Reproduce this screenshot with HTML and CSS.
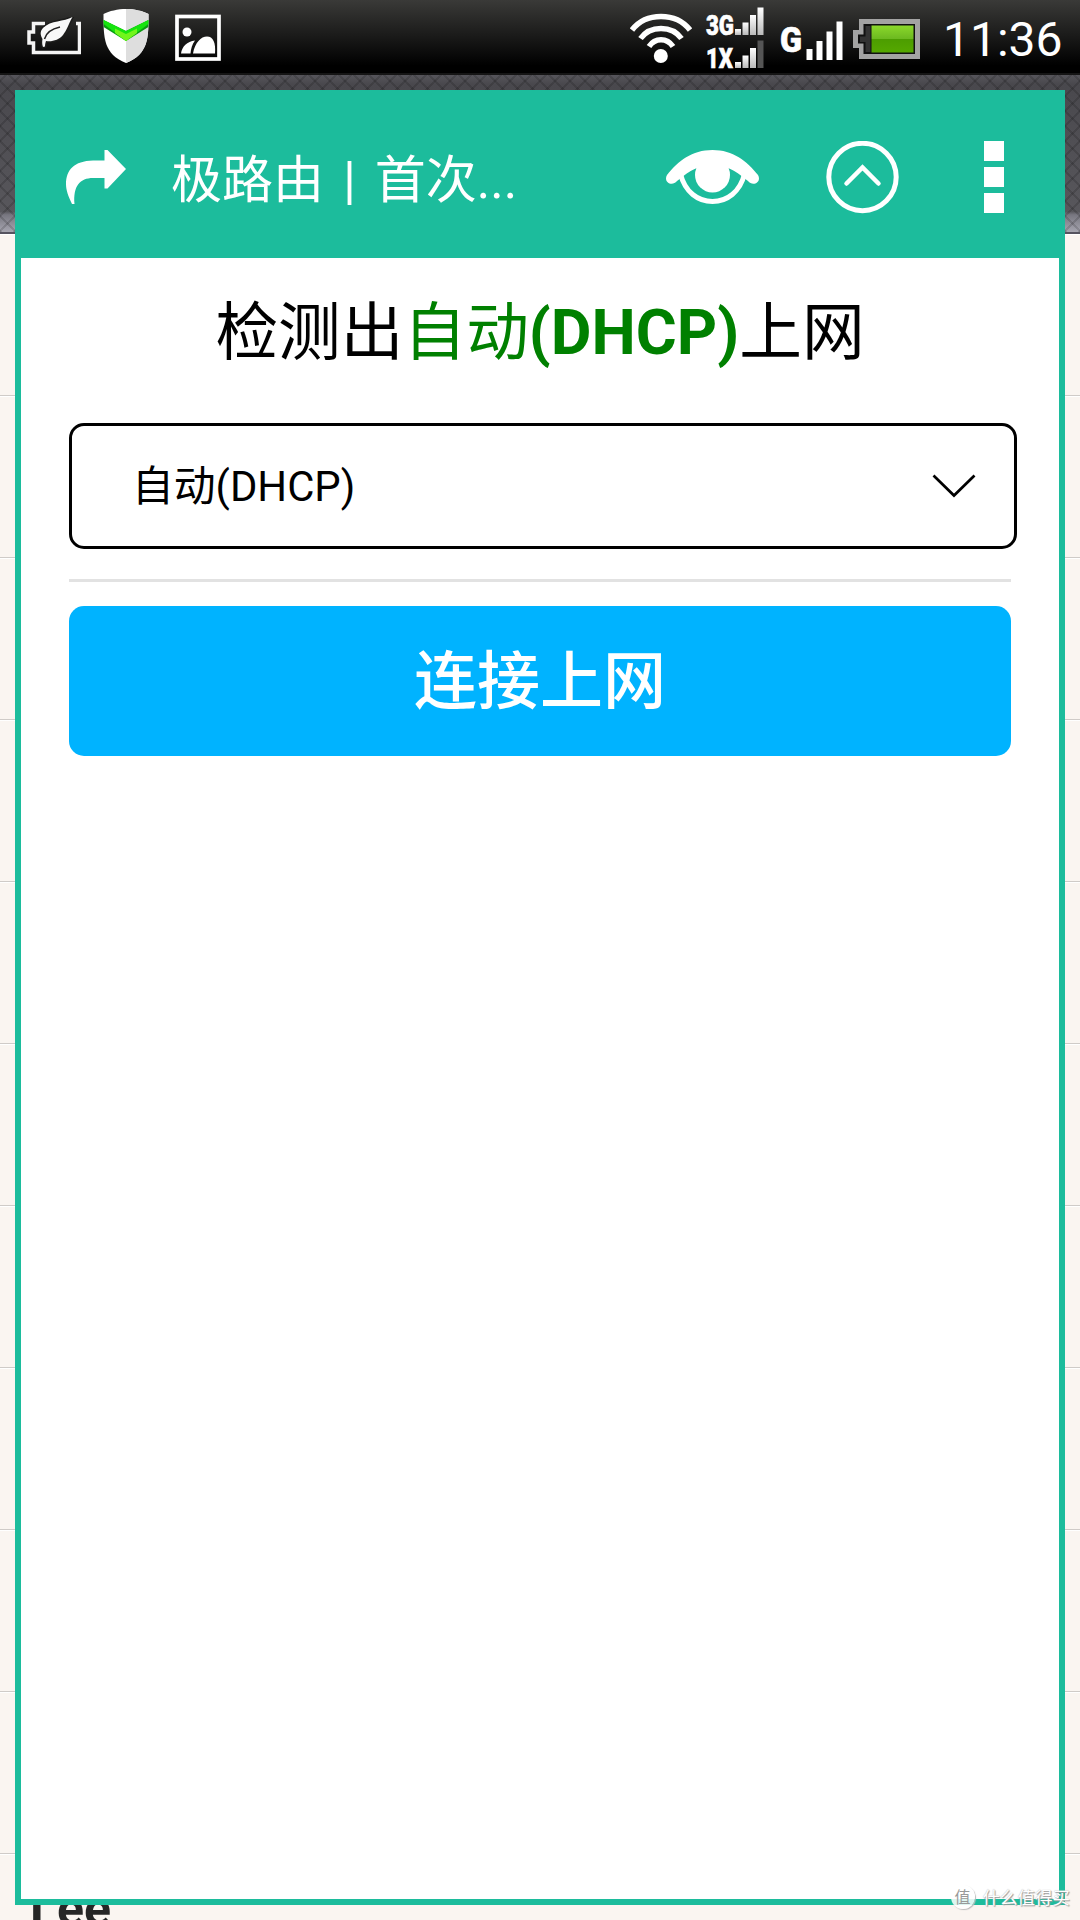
FILE: index.html
```html
<!DOCTYPE html>
<html lang="zh-CN">
<head>
    <meta charset="UTF-8">
    <meta name="viewport" content="width=device-width, initial-scale=1.0">
    <title>极路由 | 首次设置</title>
    <link rel="stylesheet" href="styles.css">
</head>
<body>

    <div class="statusbar">
        <div class="status-left">
            <!-- power saver -->
            <svg width="54" height="38" viewBox="27 17 54 38">
                <path d="M45 23.5H33.5V32H29v11h4.500v9.500H79.500V23.500H76" fill="none" stroke="#f4f4f4" stroke-width="3.500"/>
                <path d="M72.500 17C64 22 51 20 43 28c-3.500 4-2.500 7-.5 11-.5 3-.5 5 .5 8l2-.5c0-2 .5-4 1-5.500 6 1 13-1 17-6 4-5 5-10 9.500-18z" fill="#f8f8f8" stroke="#1c1c1b" stroke-width="3" paint-order="stroke"/>
                <path d="M44.500 39C46 33 51 29 60 27" fill="none" stroke="#222" stroke-width="1.500"/>
            </svg>
            <!-- security shield -->
            <svg class="shield" width="46" height="54" viewBox="103 9 46 54">
                <path d="M126 9C118 9 109 11 103.500 14c0 24 0 40 22.500 49 22.500-9 22.500-25 22.500-49C143 11 134 9 126 9z" fill="#fff"/>
                <path d="M126 9c8 0 17 2 22.500 5 0 24 0 40-22.500 49z" fill="#dedede"/>
                <path d="M103.600 20L126 31l22.400-11v7L126 41l-22.400-14z" fill="#0b9a12"/>
                <path d="M103.600 20L126 31l22.400-11v4L126 41l-22.400-17z" fill="#16e40e"/>
                <path d="M115 28.500l11 5.500 11-5.500v4.500l-11 8-11-8z" fill="#72f51b"/>
            </svg>
            <!-- gallery -->
            <svg width="46" height="47" viewBox="175 14 46 47">
                <rect x="177" y="16.500" width="42" height="42.500" fill="none" stroke="#fff" stroke-width="3.700"/>
                <circle cx="187" cy="32" r="4.500" fill="#fff"/>
                <path d="M181 53.500c1-7 6-12 14-13-3 4-4 8-4.500 13zM193 53.500c2-11 8-17 14-17 6 0 9 6 8 17z" fill="#fff"/>
            </svg>
        </div>

        <div class="status-right">
            <!-- wifi -->
            <svg width="62" height="50" viewBox="630 13 62 50">
                <g fill="none" stroke="#fff" stroke-width="5.500">
                    <path d="M632 30C646 12 676 12 690 30"/>
                    <path d="M640.500 38.500C650 25 672 25 681.500 38.500"/>
                    <path d="M649 46.500C655 37.500 667 37.500 673 46.500"/>
                </g>
                <circle cx="660.800" cy="56" r="7" fill="#fff"/>
            </svg>
            <!-- 3G / 1X signal -->
            <svg class="dual" width="58" height="62" viewBox="706 7 58 62">
                <defs>
                    <linearGradient id="bar" x1="0" y1="0" x2="0" y2="1">
                        <stop offset="0" stop-color="#fff"/>
                        <stop offset="1" stop-color="#b9b9b9"/>
                    </linearGradient>
                </defs>
                <text class="net" x="706" y="34.500" textLength="28" lengthAdjust="spacingAndGlyphs">3G</text>
                <text class="net" x="706" y="67.500" textLength="27" lengthAdjust="spacingAndGlyphs">1X</text>
                <g fill="url(#bar)">
                    <rect x="735" y="29" width="6" height="6"/>
                    <rect x="742.500" y="22.500" width="6" height="12.500"/>
                    <rect x="750" y="15" width="6" height="20"/>
                    <rect x="757.500" y="7.500" width="6" height="27.500"/>
                    <rect x="735" y="62" width="6" height="6"/>
                    <rect x="742.500" y="55.500" width="6" height="12.500"/>
                    <rect x="750" y="48" width="6" height="20"/>
                </g>
                <rect x="757.500" y="40.500" width="6" height="27.500" fill="#555"/>
            </svg>
            <!-- G signal -->
            <svg class="gsm" width="62" height="40" viewBox="781 21 62 40">
                <text class="net net-big" x="780" y="51.500" textLength="22" lengthAdjust="spacingAndGlyphs">G</text>
                <g fill="#fff">
                    <rect x="806.500" y="49" width="6" height="11"/>
                    <rect x="816.500" y="41" width="6" height="19"/>
                    <rect x="826.500" y="31.500" width="6" height="28.500"/>
                    <rect x="836.500" y="21.500" width="6" height="38.500"/>
                </g>
            </svg>
            <!-- battery -->
            <svg class="battery" width="67" height="40" viewBox="853 19 67 40">
                <defs>
                    <linearGradient id="charge" x1="0" y1="0" x2="0" y2="1">
                        <stop offset="0" stop-color="#8bd92b"/>
                        <stop offset=".5" stop-color="#6cb820"/>
                        <stop offset=".5" stop-color="#4c9d00"/>
                        <stop offset="1" stop-color="#55a800"/>
                    </linearGradient>
                </defs>
                <path d="M859 19h61v40h-61V48h-6V30h6z" fill="#a3a3a3"/>
                <path d="M863.500 24H915v30h-51.500V43.500H858v-9h5.500z" fill="#111"/>
                <path d="M865.500 26h5v26h-5V42H860v-5.500h5.500z" fill="#333"/>
                <rect x="871.500" y="25.500" width="42" height="27" fill="url(#charge)"/>
            </svg>
            <span class="clock">11:36</span>
        </div>
    </div>

    <!-- contact list behind the window -->
    <div class="backdrop">
        <div class="backdrop-header"></div>
        <div class="row"></div>
        <div class="row"></div>
        <div class="row"></div>
        <div class="row"></div>
        <div class="row"></div>
        <div class="row"></div>
        <div class="row"></div>
        <div class="row"></div>
        <div class="row"></div>
        <div class="row"></div>
        <div class="row row-name">Lee</div>
    </div>

    <div class="window">
        <div class="toolbar">
            <svg width="60" height="54" viewBox="66 150 60 54">
                <path d="M104.500 150h3L126 169l-18.500 19.500h-3V178H93c-13 0-20 8-18.500 26H72c-4-8-6-14-6-20 0-14 8-23 27-23.500h11.500z" fill="#fff"/>
            </svg>
            <span class="title">极路由 | 首次...</span>
            <svg class="eye" width="94" height="55" viewBox="666 150 94 55">
                <path d="M667 175C678 161 692 150 712.500 150S747 161 758 175c4 7-5 12-10 6l-2-1.500C735 170 725 165 712.500 165S690 170 679 179.500l-2 1.500c-5 6-14 1-10-6z" fill="#fff"/>
                <circle cx="712.500" cy="175" r="17.500" fill="#fff"/>
                <path d="M680.500 174C685 192 698 201.500 712.500 201.500S740 192 744.500 174" fill="none" stroke="#fff" stroke-width="5"/>
            </svg>
            <svg class="up" width="73" height="73" viewBox="826 141 73 73">
                <circle cx="862.500" cy="177" r="33.700" fill="none" stroke="#fff" stroke-width="5"/>
                <path d="M846.500 183.500l16-16 16 16" fill="none" stroke="#fff" stroke-width="4.500" stroke-linecap="round"/>
            </svg>
            <div class="menu">
                <i></i>
                <i></i>
                <i></i>
            </div>
        </div>

        <div class="content">
            <h1>检测出<b>自动<strong>(DHCP)</strong></b>上网</h1>
            <div class="select">
                <span>自动(DHCP)</span>
                <svg width="44" height="26" viewBox="0 0 44 26">
                    <path d="M1.500 2.500L22 22.500 42.500 2.500" fill="none" stroke="#000" stroke-width="2.700"/>
                </svg>
            </div>
            <hr>
            <button class="connect">连接上网</button>
        </div>
    </div>

    <div class="watermark">
        <span class="badge">值</span>
        <span>什么值得买</span>
    </div>

</body>
</html>
```

FILE: styles.css
```css
* {
    box-sizing: border-box;
}

body {
    position: relative;
    width: 1080px;
    height: 1920px;
    margin: 0;
    overflow: hidden;
    background-color: #faf5f1;
    font-family: Roboto, "Noto Sans CJK SC", sans-serif;
}

svg {
    display: block;
    flex: none;
}

/* status bar */
.statusbar {
    display: flex;
    justify-content: space-between;
    height: 75px;
    padding: 0 20px 0 27px;
    background: linear-gradient(#3a3a38, #1d1d1c 45%, #000 90%);
    border-bottom: 2px solid #151515;
}

.status-left,
.status-right {
    display: flex;
    align-items: flex-start;
}

.status-left {
    padding-top: 14px;
    gap: 24px;
}

.status-left svg:first-child {
    margin-top: 3px;
}

.shield {
    margin: -5px 0 0 -2px;
}

.status-left svg:last-child {
    margin-left: 2px;
}

.status-right {
    padding-top: 7px;
}

.status-right svg:first-child {
    margin-top: 6px;
}

.dual {
    margin-left: 14px;
    overflow: visible;
}

.gsm {
    margin: 14px 0 0 17px;
    overflow: visible;
}

.battery {
    margin: 12px 0 0 10px;
}

.net {
    font: 900 27px Roboto, sans-serif;
    fill: #fff;
    stroke: #fff;
    stroke-width: .6px;
}

.net-big {
    font-size: 35px;
}

.clock {
    width: 117px;
    margin: 5px 0 0 23px;
    color: #fff;
    font-size: 48px;
    line-height: 56px;
    white-space: nowrap;
}

/* list in the background */
.backdrop-header {
    height: 159px;
    background:
        repeating-linear-gradient(45deg, rgba(0, 0, 0, .14) 0 2px, transparent 2px 10.600px),
        repeating-linear-gradient(-45deg, rgba(0, 0, 0, .14) 0 2px, transparent 2px 10.600px),
        linear-gradient(#56555b, #49484d 6%, #58575c 87%, #77767f 89%, #a6a5b0);
    border-bottom: 2px solid #55535f;
}

.row {
    height: 162px;
    border-top: 1px solid #fff;
    border-bottom: 1px solid #cfcbc8;
}

.row-name {
    padding: 25px 0 0 30px;
    color: #262626;
    font-size: 50px;
    font-weight: bold;
    line-height: 58px;
}

/* floating window */
.window {
    position: absolute;
    top: 90px;
    left: 15px;
    width: 1050px;
    height: 1815px;
    background-color: #fff;
    border: 6px solid #1cbc9c;
    border-top: none;
}

.toolbar {
    display: flex;
    align-items: center;
    height: 168px;
    padding: 6px 55px 0 45px;
    background-color: #1cbc9c;
    color: #fff;
}

.title {
    width: 360px;
    margin-left: 45px;
    padding-top: 7px;
    font-size: 51px;
    line-height: 60px;
    white-space: nowrap;
    word-spacing: 6.500px;
}

.eye {
    margin-left: 135px;
}

.up {
    margin-left: 66px;
}

.menu {
    display: flex;
    flex-direction: column;
    gap: 6px;
    margin-left: 85px;
}

.menu i {
    width: 20px;
    height: 20px;
    background-color: #fff;
}

.content {
    padding: 36px 48px 0;
}

h1 {
    margin: 0 0 51px;
    font-size: 62.700px;
    font-weight: normal;
    line-height: 78px;
    text-align: center;
    white-space: nowrap;
}

h1 b {
    color: #008000;
    font-weight: normal;
}

.select {
    display: flex;
    align-items: center;
    justify-content: space-between;
    width: 948px;
    height: 126px;
    padding: 0 38px 0 60px;
    border: 3px solid #000;
    border-radius: 15px;
    font-size: 41.800px;
}

.select span {
    padding-bottom: 7px;
}

hr {
    height: 3px;
    margin: 30px 0 24px;
    border: none;
    background-color: #e2e2e2;
}

.connect {
    display: block;
    width: 100%;
    height: 150px;
    padding: 0 0 12px;
    border: none;
    border-radius: 15px;
    background-color: #00b3ff;
    color: #fff;
    font-family: inherit;
    font-size: 63px;
    font-weight: 500;
}

/* site watermark */
.watermark {
    position: absolute;
    right: 10px;
    bottom: 10px;
    display: flex;
    align-items: center;
    gap: 8px;
    color: #fff;
    font-family: "Noto Sans CJK SC", sans-serif;
    font-size: 17.500px;
    line-height: 26px;
    text-shadow: 1px 1px 1px #999, 0 0 1px #aaa;
}

.badge {
    width: 24px;
    height: 24px;
    border-radius: 50%;
    background-color: rgba(255, 255, 255, .85);
    box-shadow: 1px 1px 1px #bbb;
    color: #999;
    font-size: 16px;
    line-height: 22px;
    text-align: center;
    text-shadow: none;
}
```
